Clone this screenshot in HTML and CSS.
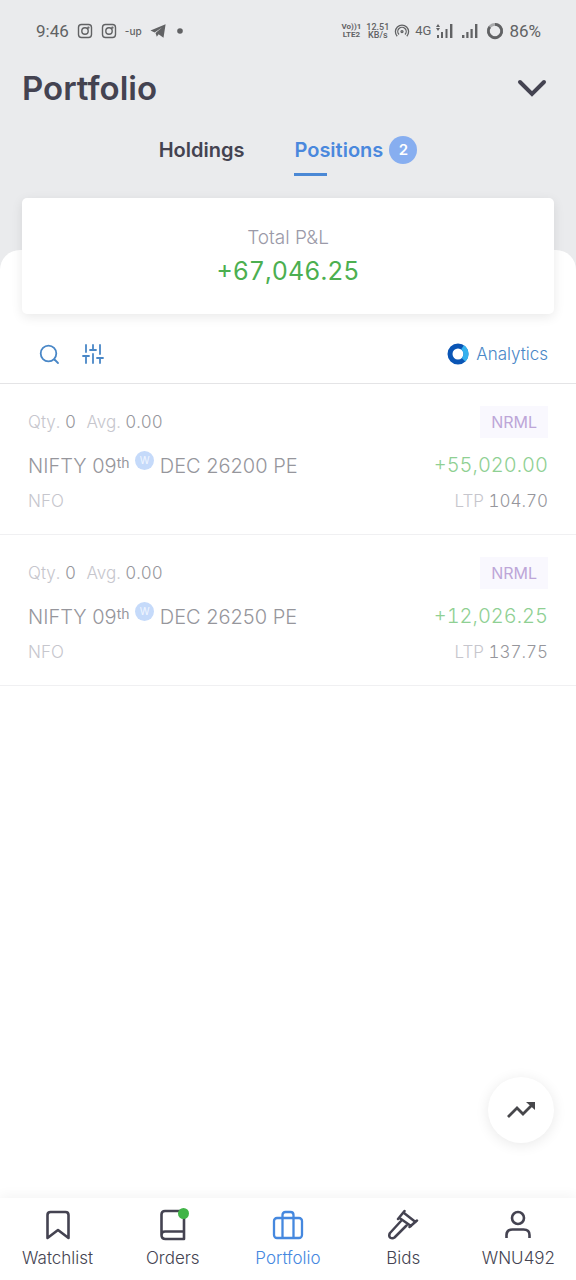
FILE: index.html
```html
<!DOCTYPE html>
<html lang="en">
<head>
<meta charset="utf-8">
<meta name="viewport" content="width=device-width, initial-scale=1">
<title>Portfolio</title>
<link rel="stylesheet" href="styles.css">
</head>
<body>
<div class="app">
  <div class="status">
    <div class="status-left">
      <span>9:46</span>
      <svg width="16" height="16" viewBox="0 0 16 16" fill="none" stroke="currentColor" stroke-width="1.4"><rect x="1.5" y="1.5" width="13" height="13" rx="3"/><circle cx="8" cy="8" r="3.2"/><circle cx="11.4" cy="4.6" r=".5"/></svg>
      <svg width="16" height="16" viewBox="0 0 16 16" fill="none" stroke="currentColor" stroke-width="1.4"><rect x="1.5" y="1.5" width="13" height="13" rx="3"/><circle cx="8" cy="8" r="3.2"/><circle cx="11.4" cy="4.6" r=".5"/></svg>
      <span class="up">-up</span>
      <svg width="16" height="16" viewBox="0 0 16 16" fill="currentColor"><path d="M.5 7.6 15.6 1.2 13.5 14.8 8.6 11.3 6.8 13.8 5.5 10 12 4.6 4.6 9.4Z"/></svg>
      <svg class="dot" width="6" height="6" viewBox="0 0 6 6" fill="currentColor"><circle cx="3" cy="3" r="2.8"/></svg>
    </div>
    <div class="status-right">
      <span class="stack">Vo))1<br>LTE2</span>
      <span class="stack speed">12.51<br>KB/s</span>
      <svg width="16" height="16" viewBox="0 0 16 16" fill="none" stroke="currentColor" stroke-width="1.3"><path d="M3.2 13.2a6.6 6.6 0 1 1 9.6 0M5 11.5a4.2 4.2 0 1 1 6 0"/><circle cx="8" cy="8.600" r="1"/></svg>
      <span class="net">4G</span>
      <svg width="17" height="16" viewBox="0 0 17 16" fill="currentColor"><path d="M2 1 4 4H0ZM2 8 4 5H0ZM1 12h2v3H1ZM5 9h2v6H5ZM9.5 6h2v9h-2ZM14 1h2.4v14H14Z"/></svg>
      <svg class="sim" width="17" height="16" viewBox="0 0 17 16" fill="currentColor"><path d="M1 12h2.4v3H1ZM5.3 9h2.2v6H5.3ZM9.5 6h2.2v9H9.5ZM14 1h2.4v14H14Z"/></svg>
      <svg class="ring" width="18" height="18" viewBox="0 0 18 18" fill="none" stroke-width="2.8"><circle cx="9" cy="9" r="6.7" stroke="#a9aaac"/><path d="M9 2.3a6.7 6.7 0 1 1-5.2 2.5" stroke="currentColor"/></svg>
      <span>86%</span>
    </div>
  </div>

  <header class="header">
    <h1 class="title">Portfolio</h1>
    <button class="plain" aria-label="Show overview"><svg width="32" height="20" viewBox="0 0 32 20" fill="none" stroke="#444351" stroke-width="4" stroke-linecap="round"><path d="m4 4 12 12L28 4"/></svg></button>
  </header>

  <nav class="tabs" aria-label="Portfolio sections">
    <a class="tab" href="#holdings">Holdings</a>
    <a class="tab active" href="#positions" aria-current="page">Positions <span class="badge">2</span></a>
  </nav>

  <main class="sheet">
    <section class="card">
      <div class="card-label">Total P&amp;L</div>
      <div class="card-value">+67,046.25</div>
    </section>

    <div class="toolbar">
      <button class="plain" aria-label="Search"><svg width="22" height="22" viewBox="0 0 22 22" fill="none" stroke="currentColor" stroke-width="1.8" stroke-linecap="round"><circle cx="10.5" cy="10.5" r="7.8"/><path d="m16.500 16.500 3.500 3.500"/></svg></button>
      <button class="plain" aria-label="Filter"><svg width="22" height="22" viewBox="0 0 22 22" fill="none" stroke="currentColor" stroke-width="1.8" stroke-linecap="round"><path d="M4 2v7M4 13v7M1 13h6M11 2v5M11 11v9M8 7h6M18 2v9M18 15v5M15 15h6"/></svg></button>
      <a class="analytics" href="#analytics"><svg width="22" height="22" viewBox="0 0 22 22" fill="none" stroke-width="5"><circle cx="11" cy="11" r="8" stroke="#0a55b5"/><path d="M15.5 4.4a8 8 0 0 1 1 12.4" stroke="#35b1ee"/></svg>Analytics</a>
    </div>

    <ul class="positions" id="positions">
      <li class="position">
        <div class="line"><span class="muted">Qty.</span> 0 <span class="muted avg">Avg.</span> 0.00</div>
        <span class="tag">NRML</span>
        <div class="name">NIFTY 09<span class="ord">th</span> <span class="week">W</span> DEC 26200 PE</div>
        <div class="gain">+55,020.00</div>
        <div class="line muted">NFO</div>
        <div class="line ltp"><span class="muted">LTP</span> 104.70</div>
      </li>
      <li class="position">
        <div class="line"><span class="muted">Qty.</span> 0 <span class="muted avg">Avg.</span> 0.00</div>
        <span class="tag">NRML</span>
        <div class="name">NIFTY 09<span class="ord">th</span> <span class="week">W</span> DEC 26250 PE</div>
        <div class="gain">+12,026.25</div>
        <div class="line muted">NFO</div>
        <div class="line ltp"><span class="muted">LTP</span> 137.75</div>
      </li>
    </ul>
  </main>

  <div class="dock">
    <button class="fab" aria-label="Open charts"><svg width="30" height="18" viewBox="0 0 30 18" fill="none" stroke="#47474b" stroke-width="2.8"><path d="m2 16 9-9 6 6L26 4"/><path d="M20 1h9v8Z" fill="#47474b" stroke="none"/></svg></button>
    <nav class="bottom" aria-label="Main">
      <a class="item" href="#watchlist"><svg width="32" height="32" viewBox="0 0 32 32" fill="none" stroke="currentColor" stroke-width="2.6" stroke-linejoin="round"><path d="M5.500 29V6q0-3 3-3h15q3 0 3 3v23L16 21Z"/></svg>Watchlist</a>
      <a class="item" href="#orders"><span class="notify"><svg width="32" height="32" viewBox="0 0 32 32" fill="none" stroke="currentColor" stroke-width="2.6" stroke-linejoin="round"><path d="M27 2H8Q4.500 2 4.500 5.500V26q0 4 4 4H27ZM27 22.500H8q-3.500 0-3.500 3.500"/></svg></span>Orders</a>
      <a class="item current" href="#portfolio" aria-current="page"><svg width="32" height="32" viewBox="0 0 32 32" fill="none" stroke="currentColor" stroke-width="2.3" stroke-linejoin="round"><rect x="2" y="9" width="28" height="20" rx="3"/><path d="M10.500 29V6q0-3 3-3h5q3 0 3 3v23"/></svg>Portfolio</a>
      <a class="item" href="#bids"><svg width="32" height="32" viewBox="0 0 32 32" fill="none" stroke="currentColor" stroke-width="2.5" stroke-linejoin="round" stroke-linecap="round"><path d="M11 10 17.500 2M22.500 18l7.500-6.500M17 4 28.500 13M12.500 9 24 17M14 12 3 24q-1.500 2.500 0 4.500 2.500 1.500 4.500 0L19.500 16.500"/></svg>Bids</a>
      <a class="item" href="#profile"><svg width="32" height="32" viewBox="0 0 32 32" fill="none" stroke="currentColor" stroke-width="2.6"><circle cx="16" cy="9" r="6"/><path d="M4.500 29v-3q0-5.500 6-5.500h11q6 0 6 5.500v3"/></svg>WNU492</a>
    </nav>
  </div>
</div>
</body>
</html>
```
FILE: styles.css
```css
* { box-sizing: border-box; }

body {
  margin: 0;
  background: #eaebed;
  color: #444351;
  font-family: Inter, "Liberation Sans", sans-serif;
}

svg { display: block; flex: none; }
a { color: inherit; text-decoration: none; }

.plain {
  padding: 0;
  border: 0;
  background: none;
  color: inherit;
}

.app {
  display: flex;
  flex-direction: column;
  min-height: 100vh;
}

.status {
  display: flex;
  justify-content: space-between;
  align-items: center;
  height: 62px;
  padding: 0 35px 0 36px;
  color: #616264;
  font: 17px/20px Roboto, sans-serif;
}

.status-left, .status-right { display: flex; align-items: center; }
.status-left { gap: 8px; }
.status-right { gap: 5px; }
.up { font: 500 10px/16px Inter, sans-serif; }
.dot { margin-left: 3px; }
.stack { font-size: 8px; line-height: 8px; font-weight: 700; text-align: center; }
.speed { font-size: 9px; font-weight: 500; }
.net { font-size: 13px; }
.sim, .ring { margin-left: 3px; }

.header {
  display: flex;
  justify-content: space-between;
  align-items: center;
  padding: 6px 28px 6px 22px;
}

.title {
  margin: 0;
  font-size: 33px;
  line-height: 40px;
  font-weight: 600;
}

.tabs {
  display: flex;
  justify-content: center;
  gap: 50px;
  padding-top: 20px;
  font-size: 20px;
  line-height: 32px;
  font-weight: 600;
}

.tab { display: flex; align-items: center; gap: 6px; }
.active { color: #4a88dd; }

.active::after {
  content: "";
  position: absolute;
  width: 33px;
  height: 3px;
  margin-top: 48px;
  background: #4a88d5;
}

.badge {
  width: 28px;
  border-radius: 14px;
  background: #87aef0;
  color: #fff;
  font-size: 15px;
  line-height: 28px;
  text-align: center;
}

.sheet {
  flex: 1;
  margin-top: 84px;
  border-radius: 20px 20px 0 0;
  background: #fff;
}

.card {
  margin: -52px 22px 0;
  padding: 26px 16px 24px;
  border-radius: 5px;
  background: #fff;
  box-shadow: 0 3px 12px rgba(0, 0, 0, .09);
  text-align: center;
}

.card-label { color: #9b9aa8; font-size: 19px; line-height: 28px; font-weight: 300; }
.card-value { color: #4caf50; font-size: 25px; line-height: 38px; }
.card-value, .gain, .line { font-variant-numeric: tabular-nums; }

.toolbar {
  display: flex;
  align-items: center;
  gap: 22px;
  padding: 29px 28px 18px 38px;
  border-bottom: 1px solid #e4e4e6;
  color: #4987c7;
}

.analytics {
  display: flex;
  align-items: center;
  gap: 7px;
  margin-left: auto;
  font-size: 17px;
  line-height: 22px;
  font-weight: 300;
}

.positions { margin: 0; padding: 0; list-style: none; }

.position {
  display: grid;
  grid-template-columns: 1fr auto;
  align-items: center;
  padding: 22px 28px 20px;
  border-bottom: 1px solid #f0f0f2;
  color: #96969c;
}

.line { font-size: 17px; line-height: 26px; font-weight: 300; }
.muted { color: #c6c6cd; }
.avg { margin-left: 6px; }
.ltp { text-align: right; }

.tag {
  justify-self: end;
  padding: 0 11px;
  background: #f9f8fe;
  color: #bda6d8;
  font-size: 16px;
  line-height: 32px;
}

.name, .gain { padding-top: 6px; font-size: 20px; line-height: 44px; font-weight: 300; }
.gain { padding-top: 4px; color: #8fd093; text-align: right; }
.ord { font-size: 14px; line-height: 1; vertical-align: 5px; font-weight: 400; }

.week {
  display: inline-block;
  width: 19px;
  border-radius: 10px;
  background: #c5dafa;
  color: #f1f6ff;
  font-size: 10px;
  font-weight: 400;
  line-height: 19px;
  text-align: center;
  vertical-align: 9px;
}

.dock {
  position: sticky;
  bottom: 0;
  background: #fff;
}

.fab {
  position: absolute;
  right: 22px;
  bottom: 137px;
  display: grid;
  place-items: center;
  width: 66px;
  height: 66px;
  border: 0;
  border-radius: 50%;
  background: #fff;
  box-shadow: 0 2px 14px rgba(0, 0, 0, .09);
}

.bottom {
  display: grid;
  grid-template-columns: repeat(5, 1fr);
  padding: 11px 0;
  box-shadow: 0 -2px 12px rgba(0, 0, 0, .05);
}

.item {
  display: flex;
  flex-direction: column;
  align-items: center;
  gap: 6px;
  font-size: 17px;
  line-height: 22px;
  font-weight: 300;
}

.current { color: #4588df; }
.notify { position: relative; }

.notify::after {
  content: "";
  position: absolute;
  top: -1px;
  right: 0;
  width: 11px;
  height: 11px;
  border-radius: 50%;
  background: #41b448;
}
```
